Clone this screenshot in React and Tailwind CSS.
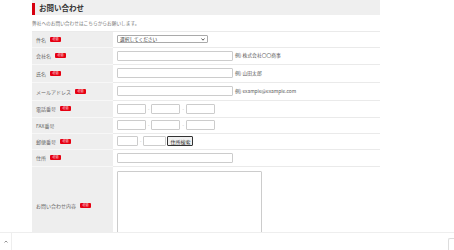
import React from 'react';

const Badge = () => (
  <span className="ml-[4px] inline-flex items-center justify-center w-[11px] h-[5px] bg-[#e60012] text-white text-[3px] leading-none rounded-[1px]">
    必須
  </span>
);

const TextInput = ({ className = '' }) => (
  <input
    type="text"
    className={`h-[10px] border border-[#cccccc] bg-white rounded-[1px] outline-none ${className}`}
  />
);

const Dash = () => <span className="mx-[2px] text-[#888] text-[4px] leading-none">-</span>;

const Hint = ({ children }) => (
  <span className="ml-[2px] text-[4.8px] leading-none text-[#555]">{children}</span>
);

const Row = ({ label, required, height, children }) => (
  <div className="flex" style={{ height }}>
    <div className="w-[81px] shrink-0 bg-[#eeeeee] border-b border-[#f7f7f7] flex items-center pl-[4px] text-[5px] text-[#666] leading-none">
      <span>{label}</span>
      {required && <Badge />}
    </div>
    <div className="flex-1 border-b border-[#eaeaea] flex items-center pl-[4px]">
      {children}
    </div>
  </div>
);

export default function App() {
  return (
    <div
      className="w-[454px] h-[250px] overflow-hidden bg-white relative"
      style={{ fontFamily: '"Noto Sans CJK JP", "Noto Sans", sans-serif' }}
    >
      <div className="ml-[32px] w-[348px]">
        {/* Title */}
        <div className="h-[15px] bg-[#efefef] flex items-center">
          <div className="w-[3px] h-[12px] mt-[3px] bg-[#d7000f] self-start" />
          <h1 className="ml-[4px] text-[7.5px] font-bold text-[#333] leading-none">お問い合わせ</h1>
        </div>
        <p className="mt-[6px] text-[4.7px] text-[#777] leading-none">
          弊社へのお問い合わせはこちらからお願いします。
        </p>

        {/* Form */}
        <div className="mt-[5px] border-t border-[#eaeaea]">
          <Row label="件名" required height={16}>
            <div className="w-[91px] h-[8px] border border-[#aaaaaa] rounded-[1px] flex items-center justify-between px-[2px]">
              <span className="text-[4.7px] text-[#333] leading-none">選択してください</span>
              <svg width="4" height="3" viewBox="0 0 4 3">
                <path d="M0.5 0.5 L2 2.2 L3.5 0.5" fill="none" stroke="#333" strokeWidth="0.8" />
              </svg>
            </div>
          </Row>
          <Row label="会社名" required height={17}>
            <TextInput className="w-[116px]" />
            <Hint>例) 株式会社〇〇商事</Hint>
          </Row>
          <Row label="氏名" required height={18}>
            <TextInput className="w-[116px]" />
            <Hint>例) 山田太郎</Hint>
          </Row>
          <Row label="メールアドレス" required height={18}>
            <TextInput className="w-[116px]" />
            <Hint>例) example@example.com</Hint>
          </Row>
          <Row label="電話番号" required height={17}>
            <TextInput className="w-[29px]" />
            <Dash />
            <TextInput className="w-[29px]" />
            <Dash />
            <TextInput className="w-[29px]" />
          </Row>
          <Row label="FAX番号" height={16}>
            <TextInput className="w-[29px]" />
            <Dash />
            <TextInput className="w-[29px]" />
            <Dash />
            <TextInput className="w-[29px]" />
          </Row>
          <Row label="郵便番号" required height={16}>
            <TextInput className="w-[21px]" />
            <Dash />
            <TextInput className="w-[23px]" />
            <button className="ml-[1px] h-[10px] w-[26px] border border-[#333] bg-[#f0f0f0] rounded-[1px] text-[5px] text-[#333] leading-none">
              住所検索
            </button>
          </Row>
          <Row label="住所" required height={17}>
            <TextInput className="w-[116px]" />
          </Row>
          <Row label="お問い合わせ内容" required height={78}>
            <textarea className="w-[145px] h-[68px] border border-[#cccccc] rounded-[1px] resize-none outline-none" />
          </Row>
        </div>
      </div>

      {/* Bottom bar */}
      <div className="fixed bottom-0 left-0 w-[454px] h-[18px] bg-white border-t border-[#eeeeee] flex">
        <div className="w-[12px] h-full border-r border-[#eeeeee] flex items-center justify-center">
          <svg width="4" height="3" viewBox="0 0 4 3">
            <path d="M0.5 2.5 L2 1 L3.5 2.5" fill="none" stroke="#666" strokeWidth="0.7" />
          </svg>
        </div>
        <div className="ml-auto mt-[5px] w-[6px] h-[14px] border border-r-0 border-[#dddddd] rounded-l-[2px]" />
      </div>
    </div>
  );
}
